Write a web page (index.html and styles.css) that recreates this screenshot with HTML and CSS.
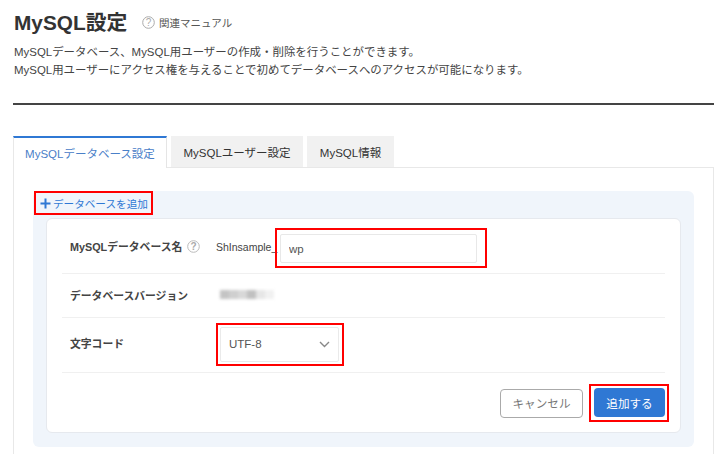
FILE: index.html
```html
<!DOCTYPE html>
<html lang="ja">
<head>
    <meta charset="UTF-8">
    <meta name="viewport" content="width=device-width, initial-scale=1.0">
    <title>MySQL設定</title>
    <link rel="stylesheet" href="styles.css">
</head>
<body>
    <div class="page">
        <!-- heading -->
        <header class="head">
            <h1>MySQL設定</h1>
            <a class="manual" href="#">
                <svg class="help" width="13" height="13" viewBox="0 0 13 13"><circle cx="6.5" cy="6.5" r="5.8" fill="none" stroke="#aaa" stroke-width="1"/><text x="6.5" y="10" text-anchor="middle" class="help-mark">?</text></svg>
                関連マニュアル
            </a>
        </header>
        <p class="lead">MySQLデータベース、MySQL用ユーザーの作成・削除を行うことができます。<br>MySQL用ユーザーにアクセス権を与えることで初めてデータベースへのアクセスが可能になります。</p>
        <hr class="rule">

        <!-- tabs -->
        <nav class="tabs">
            <a class="tab active" href="#">MySQLデータベース設定</a>
            <a class="tab tab-user" href="#">MySQLユーザー設定</a>
            <a class="tab tab-info" href="#">MySQL情報</a>
        </nav>

        <section class="panel">
            <div class="addbox">
                <div class="mark mark-add">
                    <a class="addlink" href="#">
                        <svg width="11" height="11" viewBox="0 0 11 11"><path d="M5.5 0.5v10M0.5 5.5h10" stroke="#2f78d4" stroke-width="2" fill="none"/></svg>
                        データベースを追加
                    </a>
                </div>
                <form class="card">
                    <div class="row row-name">
                        <div class="label">
                            MySQLデータベース名
                            <svg class="help" width="13" height="13" viewBox="0 0 13 13"><circle cx="6.5" cy="6.5" r="5.8" fill="none" stroke="#bbb" stroke-width="1"/><text x="6.5" y="10" text-anchor="middle" class="help-mark">?</text></svg>
                        </div>
                        <span class="prefix">ShInsample_</span>
                        <div class="mark mark-input">
                            <input class="field" type="text" value="wp">
                        </div>
                    </div>
                    <div class="row row-version">
                        <div class="label">データベースバージョン</div>
                        <div class="blurred">
                            <i class="b1"></i><i class="b2"></i><i class="b3"></i><i class="b4"></i><i class="b5"></i><i class="b6"></i>
                        </div>
                    </div>
                    <div class="row row-code">
                        <div class="label">文字コード</div>
                        <div class="mark mark-select">
                            <div class="select">
                                UTF-8
                                <svg width="11" height="7" viewBox="0 0 11 7"><path d="M1 1l4.5 4.5L10 1" stroke="#888" stroke-width="1.4" fill="none"/></svg>
                            </div>
                        </div>
                    </div>
                    <div class="actions">
                        <button class="btn btn-cancel" type="button">キャンセル</button>
                        <div class="mark mark-submit">
                            <button class="btn btn-add" type="button">追加する</button>
                        </div>
                    </div>
                </form>
            </div>
        </section>
    </div>
</body>
</html>
```

FILE: styles.css
```css
* {
    margin: 0;
    padding: 0;
    box-sizing: border-box;
}

html, body {
    height: 454px;
    overflow: hidden;
    background: #fff;
}

body {
    font-family: "Liberation Sans", "Noto Sans CJK JP", sans-serif;
    font-size: 11.5px;
    color: #333;
}

a {
    text-decoration: none;
    color: inherit;
}

.page {
    padding: 9px 8px 0 13px;
}

.head {
    display: flex;
    align-items: center;
    height: 27px;
    padding-left: 1px;
}

.head h1 {
    font-size: 20.8px;
    line-height: 27px;
    color: #333;
    width: 128px;
}

.manual {
    display: flex;
    align-items: center;
    gap: 4px;
    font-size: 10.5px;
    color: #555;
}

.help-mark {
    font-size: 10px;
    fill: #aaa;
}

.lead {
    margin-top: 7px;
    padding-left: 1px;
    font-size: 11.44px;
    line-height: 18px;
    color: #444;
}

.rule {
    border: none;
    height: 2px;
    background: #444;
    margin-top: 24px;
    width: 701px;
}

/* tabs */
.tabs {
    display: flex;
    gap: 4px;
    margin-top: 31px;
    height: 31px;
}

.tab {
    display: flex;
    align-items: center;
    justify-content: center;
    height: 31px;
    background: #f1f1f1;
    color: #333;
}

.tab.active {
    width: 154px;
    background: #fff;
    color: #4a80c8;
    border-top: 2px solid #2f78d4;
    border-left: 1px solid #e8e8e8;
    border-right: 1px solid #e5e5e5;
    position: relative;
    height: 32px;
}

.tab-user {
    width: 132px;
}

.tab-info {
    width: 87px;
}

.panel {
    width: 701px;
    height: 300px;
    border-left: 1px solid #e8e8e8;
    border-right: 1px solid #e8e8e8;
    border-top: 1px solid #e8e8e8;
    padding: 22px 0 0 19px;
}

.addbox {
    width: 661px;
    height: 256px;
    background: #f0f5fb;
    border-radius: 6px;
    position: relative;
}

/* red annotation frames */
.mark {
    border: 2px solid #f00;
}

.mark-add {
    width: 119px;
    height: 24px;
    margin: 1px 0 0 1px;
    display: flex;
    align-items: center;
    padding-left: 4px;
}

.addlink {
    display: flex;
    align-items: center;
    gap: 2px;
    color: #2f78d4;
    font-size: 10.6px;
    white-space: nowrap;
}

.card {
    width: 635px;
    height: 215px;
    margin: 3px 0 0 13px;
    padding: 0 15px;
    background: #fff;
    border: 1px solid #e6e9ee;
    border-radius: 6px;
}

.row {
    display: flex;
    align-items: center;
    border-bottom: 1px solid #f0f0f0;
}

.label {
    width: 154px;
    display: flex;
    align-items: center;
    gap: 5px;
    font-size: 10.8px;
    font-weight: bold;
    color: #444;
    padding-left: 8px;
    flex-shrink: 0;
}

.row-name {
    height: 55px;
}

.prefix {
    font-size: 10.5px;
    color: #444;
    white-space: nowrap;
    width: 59px;
    margin-top: 2px;
}

.mark-input {
    width: 212px;
    height: 40px;
    margin-top: 4px;
    padding: 4px 8px 3px 3px;
}

.field {
    display: block;
    width: 100%;
    height: 100%;
    border: 1px solid #e8e8e8;
    border-radius: 2px;
    padding: 0 8px;
    font: 11.5px "Liberation Sans", sans-serif;
    color: #555;
    outline: none;
}

.row-version {
    height: 44px;
    padding-bottom: 2px;
}

.blurred {
    display: flex;
    margin-left: 4px;
    filter: blur(1.6px);
}

.blurred i {
    display: block;
    height: 9px;
    width: 9px;
}

.b1 { background: #c4c4c4; }
.b2 { background: #cfcfcf; }
.b3 { background: #d8d8d8; }
.b4 { background: #c0c0c0; }
.b5 { background: #e6e6e6; }
.b6 { background: #f1f1f1; }

.row-code {
    height: 55px;
}

.row-code .label {
    padding-bottom: 4px;
}

.mark-select {
    width: 128px;
    height: 43px;
    margin-bottom: 2px;
    padding: 2px 3px 2px 2px;
}

.select {
    height: 100%;
    display: flex;
    align-items: center;
    justify-content: space-between;
    padding: 0 8px;
    border: 1px solid #eaeaea;
    border-radius: 2px;
    color: #555;
}

.actions {
    display: flex;
    justify-content: flex-end;
    align-items: center;
    height: 60px;
    margin-right: -4px;
}

.btn {
    height: 29px;
    border-radius: 4px;
    font-family: inherit;
    font-size: 11.6px;
}

.btn-cancel {
    width: 83px;
    background: #fff;
    border: 1px solid #aaa;
    color: #777;
    margin-right: 6px;
}

.mark-submit {
    width: 80px;
    height: 38px;
    padding: 2px 2px 2px 3px;
}

.btn-add {
    width: 71px;
    background: #2f78d4;
    border: none;
    color: #fff;
}
```
